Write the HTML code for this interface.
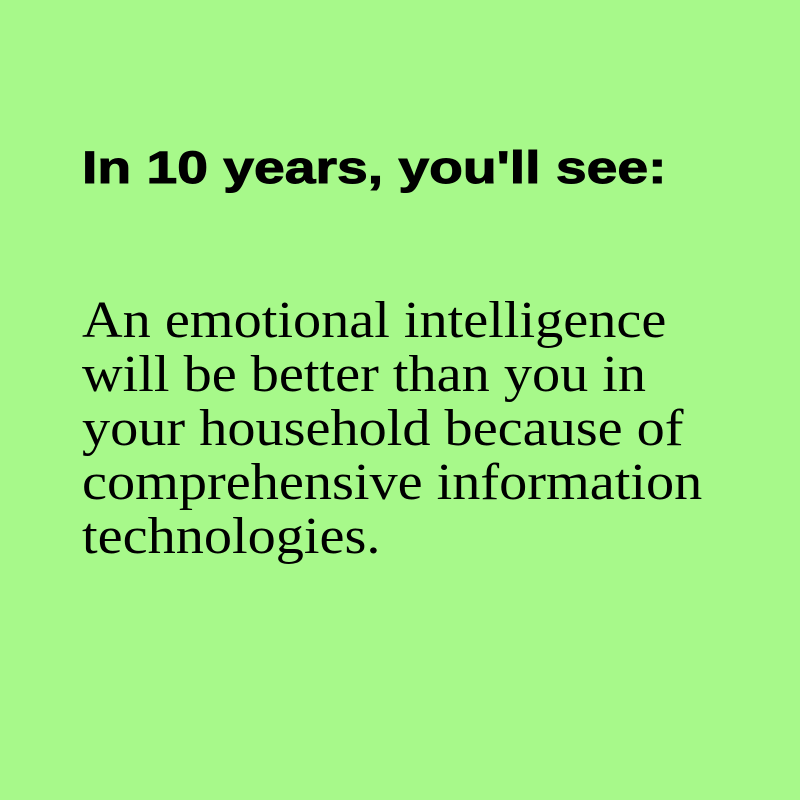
<!DOCTYPE html>
<html><head><meta charset="utf-8"><style>
html,body{margin:0;padding:0;}
body{width:800px;height:800px;background:#a7f98a;position:relative;overflow:hidden;}
h1{position:absolute;left:82px;top:142px;margin:0;font:bold 45px "Liberation Sans",Arial,sans-serif;color:#000;white-space:nowrap;transform:scaleX(1.228);transform-origin:0 0;-webkit-text-stroke:1px #000;}
p{position:absolute;left:82px;top:294px;margin:0;font:52px/54px "Liberation Serif","Times New Roman",serif;color:#000;white-space:nowrap;transform:scaleX(1.082);transform-origin:0 0;}
</style></head><body>
<h1>In 10 years, you'll see:</h1>
<p>An emotional intelligence<br>will be better than you in<br>your household because of<br>comprehensive information<br>technologies.</p>
</body></html>
